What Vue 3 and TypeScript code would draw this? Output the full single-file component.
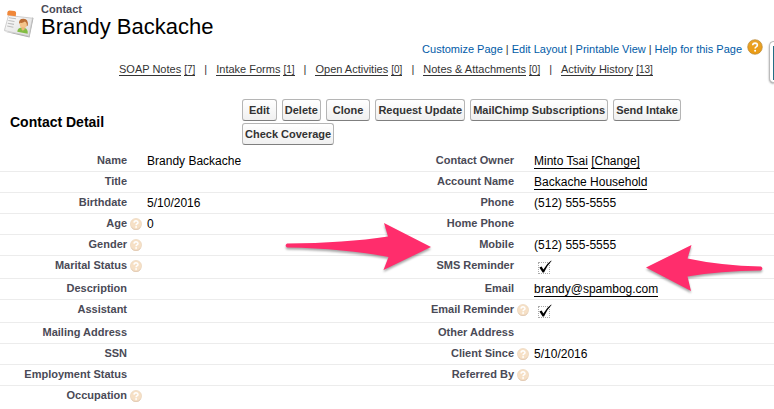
<script setup lang="ts">
interface Field {
  label: string
  value?: string
  help?: boolean
  links?: string[]
  checkbox?: string
}

const pageLinks = ['Customize Page', 'Edit Layout', 'Printable View', 'Help for this Page']

const relatedLists = [
  { name: 'SOAP Notes', count: 7 },
  { name: 'Intake Forms', count: 1 },
  { name: 'Open Activities', count: 0 },
  { name: 'Notes & Attachments', count: 0 },
  { name: 'Activity History', count: 13 },
]

const actions = [
  { name: 'Edit', wide: true },
  { name: 'Delete', wide: false },
  { name: 'Clone', wide: true },
  { name: 'Request Update', wide: false },
  { name: 'MailChimp Subscriptions', wide: false },
  { name: 'Send Intake', wide: false },
  { name: 'Check Coverage', wide: false },
]

const rows: Field[][] = [
  [{ label: 'Name', value: 'Brandy Backache' }, { label: 'Contact Owner', links: ['Minto Tsai', '[Change]'] }],
  [{ label: 'Title' }, { label: 'Account Name', links: ['Backache Household'] }],
  [{ label: 'Birthdate', value: '5/10/2016' }, { label: 'Phone', value: '(512) 555-5555' }],
  [{ label: 'Age', value: '0', help: true }, { label: 'Home Phone' }],
  [{ label: 'Gender', help: true }, { label: 'Mobile', value: '(512) 555-5555' }],
  [{ label: 'Marital Status', help: true }, { label: 'SMS Reminder', checkbox: 'sms-reminder' }],
  [{ label: 'Description' }, { label: 'Email', links: ['brandy@spambog.com'] }],
  [{ label: 'Assistant' }, { label: 'Email Reminder', help: true, checkbox: 'email-reminder' }],
  [{ label: 'Mailing Address' }, { label: 'Other Address' }],
  [{ label: 'SSN' }, { label: 'Client Since', value: '5/10/2016', help: true }],
  [{ label: 'Employment Status' }, { label: 'Referred By', help: true }],
  [{ label: 'Occupation', help: true }, { label: '' }],
]
</script>

<template>
  <main class="page">
    <header class="title-bar">
      <svg class="contact-icon" viewBox="0 0 30 30" aria-hidden="true">
        <defs>
          <linearGradient id="card" x1="0" y1="0" x2="1" y2="1">
            <stop offset="0" stop-color="#ffffff" />
            <stop offset="1" stop-color="#d9d9d9" />
          </linearGradient>
        </defs>
        <path d="M0 22.5 L25.5 28.5 L29.5 9 L28 8.5 L24 26 Z" fill="#a9a9a9" />
        <path d="M4.5 6.5 L28.5 9.2 L25 27.3 L0.4 21.5 Z" fill="url(#card)" stroke="#c4c4c4" stroke-width=".8" />
        <path d="M3.4 3.2 Q3.8 1.4 5.5 1.4 L10.5 2 Q12.4 2.3 12.1 4 L11.8 7.2 L3.2 6.2 Z" fill="#f0883a" />
        <path d="M5 8.7l7 1M4.3 11.5l6.2 1M3.8 14.2l6.2 1.2M3.2 17l6.2 1.3" stroke="#bdbdbd" stroke-width="1.1" />
        <path d="M13.3 22.8q.3-4 4-4.3l3.6.6q3.2 1.1 2.8 5.7z" fill="#83bd43" />
        <ellipse cx="19.3" cy="15" rx="3.6" ry="4.2" fill="#f4c48a" />
        <path d="M15 15q-.4-5.6 4.8-5.2 4.7.4 4 6.6l-1.1.8q.5-3.4-1.8-4.6-2.4 1.8-4.8 1.2z" fill="#bc6e34" />
        <path d="M17.6 18.2l-.2 2 1.4 1.5 1.8-1.2.2-2.2z" fill="#efb679" />
      </svg>
      <div>
        <p class="kind">Contact</p>
        <h1>Brandy Backache</h1>
      </div>
    </header>

    <nav class="page-links" aria-label="Page">
      <template v-for="(name, i) in pageLinks" :key="name">
        <span v-if="i > 0" class="bar">|</span>
        <a href="#">{{ name }}</a>
      </template>
      <svg class="page-help" viewBox="0 0 16 16" aria-hidden="true">
        <defs>
          <linearGradient id="amber" x1="0" y1="0" x2="0" y2="1">
            <stop offset="0" stop-color="#e9a52c" />
            <stop offset="1" stop-color="#eb9a10" />
          </linearGradient>
        </defs>
        <circle cx="8" cy="8" r="7.3" fill="url(#amber)" stroke="#b98a3b" stroke-width=".7" />
        <path d="M5.7 6.3q.1-2.2 2.4-2.2 2.3.1 2.3 2 0 1.1-1.2 1.8-1.1.6-1.1 1.7" fill="none" stroke="#fff" stroke-width="1.6" />
        <circle cx="8.1" cy="11.8" r="1" fill="#fff" />
      </svg>
    </nav>

    <nav class="related" aria-label="Related lists">
      <template v-for="(item, i) in relatedLists" :key="item.name">
        <span v-if="i > 0" class="bar">|</span>
        <a href="#"><span class="name">{{ item.name }}</span> <span class="count">[{{ item.count }}]</span></a>
      </template>
    </nav>

    <section class="detail">
      <div class="detail-head">
        <h2>Contact Detail</h2>
        <div class="actions">
          <button v-for="action in actions" :key="action.name" type="button" :class="{ wide: action.wide }">
            {{ action.name }}
          </button>
        </div>
      </div>

      <div class="sheet">
        <table>
          <colgroup>
            <col class="label-col" /><col class="value-col" /><col class="label-col" /><col class="value-col" />
          </colgroup>
          <tbody>
            <tr v-for="(row, r) in rows" :key="r">
              <template v-for="(field, c) in row" :key="c">
                <th scope="row">
                  <div v-if="field.label" class="label">
                    <label v-if="field.checkbox" :for="field.checkbox">{{ field.label }}</label>
                    <span v-else>{{ field.label }}</span>
                    <span class="slot">
                      <svg v-if="field.help" viewBox="0 0 12 12" aria-hidden="true">
                        <circle cx="6" cy="6" r="5.6" fill="#f6e0c6" stroke="#ead3ba" stroke-width=".6" />
                        <path d="M1.5 9.4a5.6 5.6 0 0 0 9 0" fill="none" stroke="#dfc6b0" stroke-width=".8" />
                        <path d="M4 4.6q.1-1.8 2.1-1.8 1.9.1 1.9 1.6 0 .9-1 1.4-.9.5-.9 1.4" fill="none" stroke="#fff" stroke-width="1.5" />
                        <circle cx="6.1" cy="9" r=".9" fill="#fff" />
                      </svg>
                    </span>
                  </div>
                </th>
                <td>
                  <div v-if="field.checkbox" class="check">
                    <input :id="field.checkbox" type="checkbox" checked />
                    <svg viewBox="0 0 14 14" aria-hidden="true">
                      <path d="M1.4 7.6 L3.6 6.6 L5.4 9.4 Q8.4 4 13.2 .6 L13.5 1 Q9 5.6 6 12.4 L4.6 12.6 Z" fill="#000" />
                    </svg>
                  </div>
                  <div v-else class="value">
                    <template v-for="(link, l) in field.links" :key="link">{{ l > 0 ? ' ' : '' }}<a href="#">{{ link }}</a></template>{{ field.value }}
                  </div>
                </td>
              </template>
            </tr>
          </tbody>
        </table>

        <svg class="arrow arrow-mobile" viewBox="0 0 148 52" aria-hidden="true">
          <path d="M2 21.5 Q60 21 103 14.5 L99 1 L146 25 L98.5 48 L103.5 35 Q60 26.5 2 25.5 Q-.8 23.5 2 21.5 Z" />
        </svg>
        <svg class="arrow arrow-sms" viewBox="0 0 119 50" aria-hidden="true">
          <path d="M116 22.5 Q75 21.5 42.5 14.5 L46.5 1 L1 23.5 L46 47 L42.5 32.5 Q75 27 116 26.5 Q118.8 24.5 116 22.5 Z" />
        </svg>
      </div>
    </section>

    <aside class="side-tab" aria-hidden="true"><span></span></aside>
  </main>
</template>

<style>
body {
  margin: 0;
  background: #fff;
}
</style>

<style scoped>
.page {
  position: relative;
  overflow: hidden;
  color: #000;
  font-family: "Liberation Sans", Arial, Helvetica, sans-serif;
  font-size: 12px;
  line-height: 14px;
}

h1,
h2,
p {
  margin: 0;
}

.title-bar {
  display: flex;
  align-items: flex-start;
  gap: 7px;
  padding: 3px 4px 0;
}

.contact-icon {
  width: 30px;
  height: 30px;
  margin-top: 6px;
}

.kind {
  color: #4a4a56;
  font-size: 11px;
  font-weight: bold;
  line-height: 12px;
}

h1 {
  font-size: 22px;
  font-weight: normal;
  line-height: 24px;
}

.page-links {
  display: flex;
  justify-content: flex-end;
  align-items: center;
  gap: 3px;
  height: 20px;
  padding-right: 11px;
  font-size: 11px;
}

.page-links a {
  color: #015ba7;
  text-decoration: none;
}

.page-links .bar {
  color: #333;
}

.page-help {
  width: 16px;
  height: 16px;
  margin: 0 0 4px 2px;
}

.related {
  display: flex;
  gap: 9px;
  padding: 3px 0 0 119px;
  color: #333;
  font-size: 11px;
}

.related a {
  color: #333;
  text-decoration: none;
}

.name,
.count {
  border-bottom: 1px solid #333;
}

.count {
  font-size: 10px;
}

.detail-head {
  display: flex;
  padding: 22px 0 0 10px;
}

h2 {
  flex: 0 0 232px;
  padding-top: 15px;
  font-size: 14px;
  line-height: 16px;
}

.actions {
  display: flex;
  flex-wrap: wrap;
  gap: 2px 5px;
}

.actions button {
  height: 22px;
  padding: 0 2px;
  border: 1px solid #b5b5b5;
  border-bottom-color: #7f7f7f;
  border-radius: 3px;
  background: linear-gradient(#fff, #f0f0f0);
  color: #333;
  font-family: inherit;
  font-size: 11px;
  font-weight: bold;
}

.actions .wide {
  padding: 0 6px;
}

.sheet {
  position: relative;
  margin-top: 6px;
}

table {
  width: 100%;
  border-collapse: separate;
  border-spacing: 0;
  table-layout: fixed;
}

.label-col {
  width: 19%;
}

.value-col {
  width: 31%;
}

th,
td {
  box-sizing: border-box;
  height: 21px;
  padding: 3px 0 2px;
  border-bottom: 1px solid #ececec;
  text-align: left;
  vertical-align: top;
}

tr:last-child > * {
  border-bottom: 0;
}

.label {
  display: flex;
  justify-content: flex-end;
  gap: 3px;
  padding-right: 5px;
  color: #4a4a56;
  font-size: 11px;
  line-height: 13px;
  white-space: nowrap;
}

.slot {
  flex: 0 0 12px;
  padding-top: 1px;
}

.slot svg {
  display: block;
  width: 12px;
  height: 12px;
}

.value {
  white-space: nowrap;
}

.value a {
  color: #000;
  text-decoration: none;
  border-bottom: 1px solid #000;
}

.check {
  position: relative;
  height: 17px;
  padding: 3px 0 0 4px;
  box-sizing: border-box;
}

.check input {
  display: block;
  appearance: none;
  width: 12px;
  height: 12px;
  margin: 0;
  border: 1px dotted #aaa;
}

.check svg {
  position: absolute;
  top: 1px;
  left: 4px;
  width: 14px;
  height: 14px;
  pointer-events: none;
}

.arrow {
  position: absolute;
  fill: #ff2d6c;
  filter: drop-shadow(0 2px 1px rgba(0, 0, 0, 0.35));
  overflow: visible;
  pointer-events: none;
}

.arrow-mobile {
  top: 71px;
  left: 285px;
  width: 148px;
  height: 52px;
}

.arrow-sms {
  top: 93px;
  right: 10px;
  width: 119px;
  height: 50px;
}

.side-tab {
  position: absolute;
  top: 41px;
  right: 0;
  width: 5px;
  height: 42px;
  padding: 4px 0 0;
  box-sizing: border-box;
  border: 1px solid #bbb;
  border-right: 0;
  border-radius: 5px 0 0 5px;
  background: #fff;
  box-shadow: 0 1px 2px rgba(0, 0, 0, 0.4);
}

.side-tab span {
  display: block;
  width: 1px;
  height: 34px;
  margin-left: auto;
  background: #236f86;
}
</style>
